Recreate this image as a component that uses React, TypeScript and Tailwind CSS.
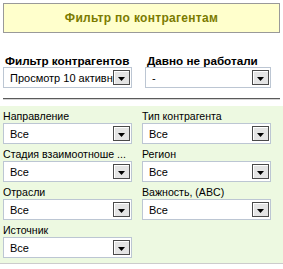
import type { ReactNode } from 'react'

function DropButton() {
  return (
    <div className="w-[17px] h-[15px] border border-[#4a4a4a] bg-[#e4e4e4] flex items-center justify-center shrink-0 shadow-[inset_1px_1px_0_#ffffff]">
      <svg width="7" height="4" viewBox="0 0 7 4" className="mt-[3px]">
        <path d="M0 0h7L3.5 4z" fill="#000" />
      </svg>
    </div>
  )
}

function Select({ value, className = '' }: { value: string; className?: string }) {
  return (
    <div className={`h-[21px] border border-[#bcc6d3] bg-white flex items-center pl-[6px] pr-[1px] ${className}`}>
      <span className="flex-1 overflow-hidden whitespace-nowrap leading-[13px] pt-[1px]">{value}</span>
      <DropButton />
    </div>
  )
}

function Field({ label, value, bold = false }: { label: ReactNode; value: string; bold?: boolean }) {
  return (
    <div className="flex flex-col">
      <div className={`h-[17px] flex items-end leading-[13px] whitespace-nowrap ${bold ? 'font-bold pl-[2px] text-[11.7px]' : 'text-[10.6px]'}`}>{label}</div>
      <Select value={value} />
    </div>
  )
}

export default function App() {
  return (
    <div className="w-[283px] h-[269px] bg-white text-black text-[11px] font-['Liberation_Sans',Arial,sans-serif] overflow-hidden">
      {/* Заголовок */}
      <div className="mx-[3px] mt-[3px] h-[30px] border border-[#999999] bg-[#ffffcc] flex items-center justify-center font-bold text-[12px] tracking-[0.3px] text-[#7b7b00]">
        Фильтр по контрагентам
      </div>

      {/* Основные фильтры */}
      <div className="mt-[17px] pl-[3px] grid grid-cols-[129px_126px] gap-x-[13px]">
        <Field label="Фильтр контрагентов" value="Просмотр 10 активных" bold />
        <Field label="Давно не работали" value="-" bold />
      </div>

      <div className="mx-[3px] mt-[10px] border-t border-[#5a5a5a] border-b border-b-[#d4d4d4]" />

      {/* Дополнительные фильтры */}
      <div className="mt-[6px] bg-[#edf9e1] pl-[3px] pb-[5px] grid grid-cols-[129px_129px] gap-x-[10px] border-b border-[#cccccc]">
        <Field label="Направление" value="Все" />
        <Field label="Тип контрагента" value="Все" />
        <Field label="Стадия взаимоотноше ..." value="Все" />
        <Field label="Регион" value="Все" />
        <Field label="Отрасли" value="Все" />
        <Field label="Важность, (ABC)" value="Все" />
        <Field label="Источник" value="Все" />
      </div>
    </div>
  )
}
